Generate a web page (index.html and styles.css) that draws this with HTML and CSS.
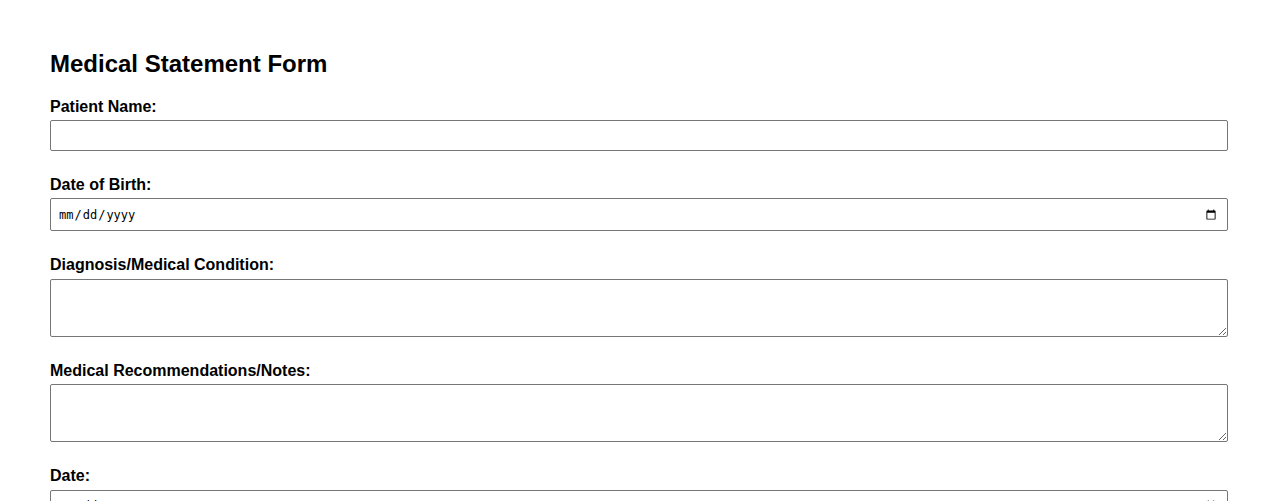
FILE: index.html
```html
<!DOCTYPE html>
<html lang="en">
<head>
<meta charset="utf-8">
<title>Medical Statement Form</title>
<link rel="stylesheet" href="styles.css">
</head>
<body>
<h2 class="title">Medical Statement Form</h2>
<form class="form">
  <div class="group">
    <label class="label" for="name">Patient Name:</label>
    <input class="field field-text" type="text" id="name">
  </div>
  <div class="group">
    <label class="label" for="dob">Date of Birth:</label>
    <input class="field field-date" type="date" id="dob">
  </div>
  <div class="group">
    <label class="label" for="diag">Diagnosis/Medical Condition:</label>
    <textarea class="field field-area" id="diag"></textarea>
  </div>
  <div class="group">
    <label class="label" for="notes">Medical Recommendations/Notes:</label>
    <textarea class="field field-area" id="notes"></textarea>
  </div>
  <div class="group">
    <label class="label" for="date">Date:</label>
    <input class="field field-date" type="date" id="date">
  </div>
</form>
</body>
</html>
```
FILE: styles.css
```css
html, body {
  background: #ffffff;
}
body {
  margin: 50px;
  font-family: "Liberation Sans", Arial, sans-serif;
  color: #000000;
}
.title {
  font-size: 24px;
  font-weight: bold;
  line-height: 27.6px;
  margin: 0 0 19.92px;
}
.form {
  display: flex;
  flex-direction: column;
}
.group {
  display: flex;
  flex-direction: column;
  margin-bottom: 25px;
}
.label {
  display: block;
  font-size: 16px;
  font-weight: bold;
  line-height: 18.4px;
  margin-bottom: 4px;
}
.field {
  display: block;
  width: 100%;
  box-sizing: border-box;
  margin: 0;
  padding: 0 8px;
  border: 1px solid #767676;
  border-radius: 2px;
  background: #ffffff;
  font-size: 13.333px;
  color: #000000;
}
.field-text {
  height: 31px;
  font-family: "Liberation Sans", Arial, sans-serif;
}
.field-date {
  height: 33px;
  padding: 0 8px 0 7px;
  font-family: "DejaVu Sans Mono", monospace;
  font-size: 12px;
}
.field-area {
  height: 58px;
  padding: 8px;
  font-family: "DejaVu Sans Mono", monospace;
  resize: vertical;
}
```
